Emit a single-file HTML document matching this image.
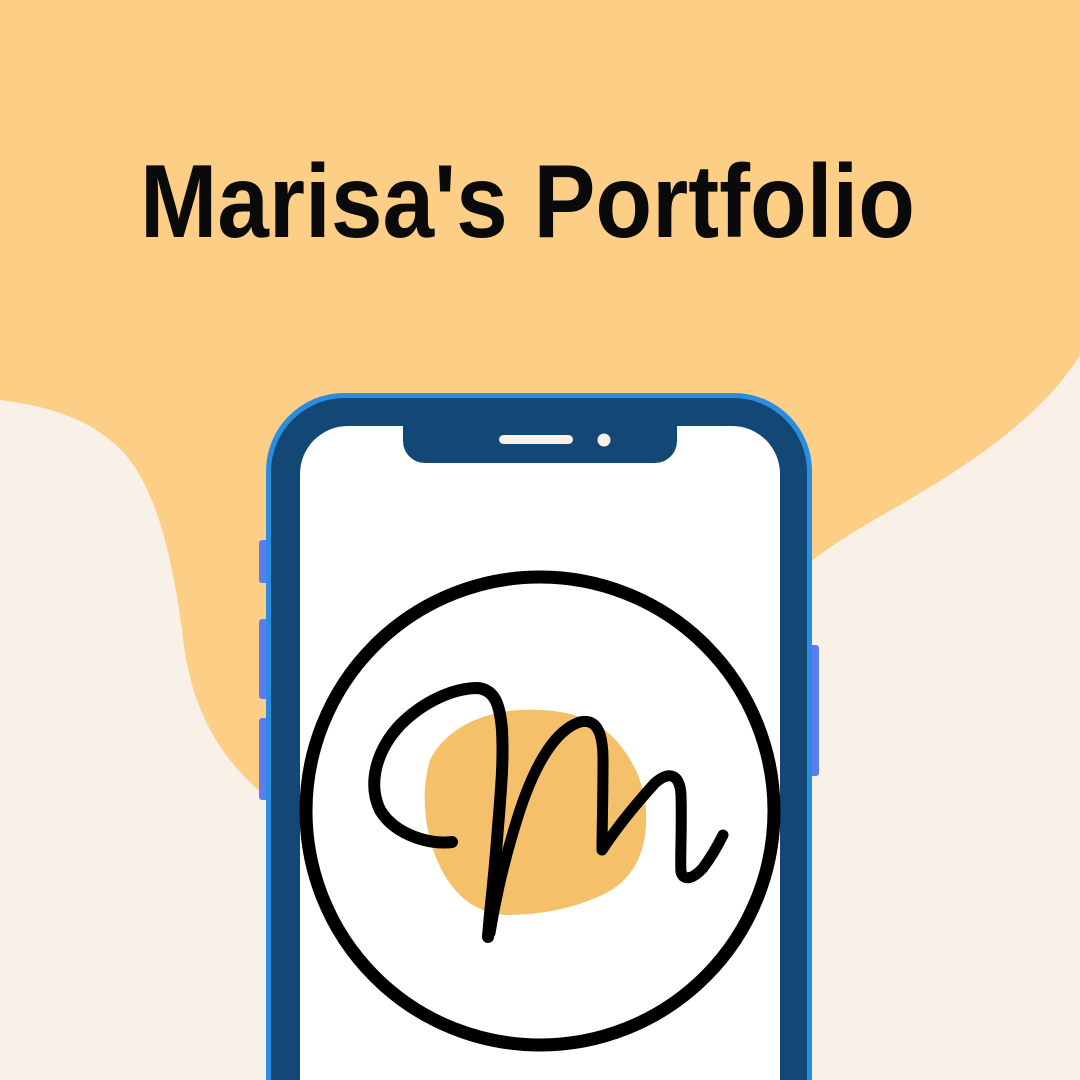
<!DOCTYPE html>
<html><head><meta charset="utf-8"><style>
html,body{margin:0;padding:0;overflow:hidden;}
body{width:1080px;height:1080px;overflow:hidden;background:#f9f0e7;}
svg{display:block;}
</style></head><body>
<svg width="1080" height="1080" viewBox="0 0 1080 1080" xmlns="http://www.w3.org/2000/svg">
<rect width="1080" height="1080" fill="#f9f0e7"/>
<path d="M0 0 H1080 V355 C1040 420 960 470 900 505 C860 528 830 545 800 570 L270 800 C220 760 190 710 182 630 C170 540 150 470 110 440 C80 415 40 405 0 400 Z" fill="#fdce86"/>
<text x="140" y="237" font-family="'Liberation Sans',sans-serif" font-weight="bold" font-size="104" textLength="775" lengthAdjust="spacingAndGlyphs" fill="#0a0a0a">Marisa's Portfolio</text>
<rect x="259" y="540" width="10" height="43" rx="3" fill="#5b7df2"/>
<rect x="259" y="619" width="10" height="80" rx="3" fill="#5b7df2"/>
<rect x="259" y="718" width="10" height="82" rx="3" fill="#5b7df2"/>
<rect x="809" y="645" width="10" height="131" rx="3" fill="#5b7df2"/>
<path d="M266 1080 V471 A78 78 0 0 1 344 393 H734 A78 78 0 0 1 812 471 V1080 Z" fill="#2a8de0"/>
<path d="M271 1080 V472 A74 74 0 0 1 345 398 H733 A74 74 0 0 1 807 472 V1080 Z" fill="#134876"/>
<path d="M300 1080 V474 A48 48 0 0 1 348 426 H732 A48 48 0 0 1 780 474 V1080 Z" fill="#ffffff"/>
<path d="M403 426 H677 V441 A22 22 0 0 1 655 463 H425 A22 22 0 0 1 403 441 Z" fill="#134876"/>
<rect x="499" y="435" width="74" height="9" rx="4.5" fill="#f9f0e7"/>
<ellipse cx="604" cy="440" rx="6.5" ry="6.5" fill="#f9f0e7"/>
<path d="M430 760 C445 730 480 712 520 710 C570 708 600 720 620 745 C640 770 650 800 645 835 C640 870 620 890 590 900 C560 912 530 915 505 915 C470 912 450 890 437 860 C425 830 420 795 430 760 Z" fill="#f5c06a"/>
<circle cx="540" cy="811" r="234" fill="none" stroke="#000" stroke-width="13"/>
<g fill="none" stroke="#000" stroke-linecap="round" stroke-linejoin="round">
<path d="M452 842 C430 845 395 835 380 810 C368 785 375 752 400 725 C425 700 455 688 478 688 C495 690 500 705 502 730 C504 765 500 800 497 840 C494 880 490 910 488 937" stroke-width="12"/>
<path d="M490 933 C497 890 507 850 520 810 C535 765 555 730 580 722 C598 718 603 735 603 760 C603 800 602 830 602 850 C615 830 635 805 655 783 C670 770 680 775 681 795 C682 830 680 860 681 872 C684 882 694 878 703 868 C712 856 718 845 723 835" stroke-width="11"/>
</g>
</svg>
</body></html>
